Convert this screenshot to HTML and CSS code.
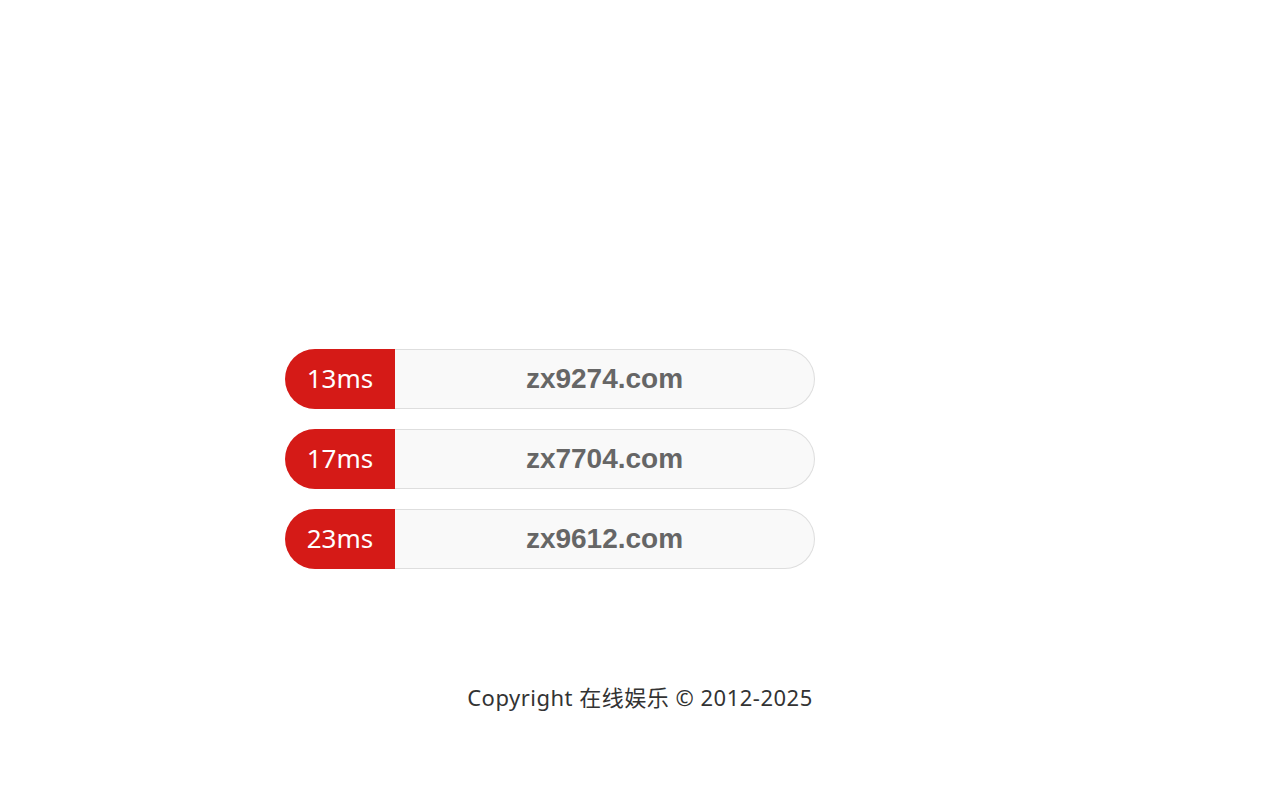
FILE: index.html
```html
<!DOCTYPE html>
<html lang="zh-CN">
<head>
<meta charset="utf-8">
<title>线路检测</title>
<link rel="stylesheet" href="styles.css">
</head>
<body>
<div class="wrap">
  <ul class="lines">
    <li class="line"><span class="ms">13ms</span><a class="domain" href="#">zx9274.com</a></li>
    <li class="line"><span class="ms">17ms</span><a class="domain" href="#">zx7704.com</a></li>
    <li class="line"><span class="ms">23ms</span><a class="domain" href="#">zx9612.com</a></li>
  </ul>
</div>
<footer class="footer">Copyright 在线娱乐 © 2012-2025</footer>
</body>
</html>
```
FILE: styles.css
```css
html, body {
  margin: 0;
  padding: 0;
  background: #fff;
}
body {
  font-family: "Noto Sans", "Noto Sans CJK SC", sans-serif;
}
.wrap {
  width: 710px;
  margin: 0 auto;
  padding-top: 349px;
}
.lines {
  list-style: none;
  margin: 0;
  padding: 0;
  display: flex;
  flex-direction: column;
  gap: 20px;
}
.line {
  display: flex;
  width: 530px;
  height: 60px;
}
.ms {
  width: 110px;
  flex: none;
  background: #d51a17;
  color: #fff;
  border-radius: 30px 0 0 30px;
  font-size: 26px;
  display: flex;
  align-items: center;
  justify-content: center;
  padding-bottom: 3px;
  box-sizing: border-box;
}
.domain {
  flex: 1;
  background: #f9f9f9;
  border: 1px solid #dedede;
  border-left: none;
  border-radius: 0 30px 30px 0;
  color: #666;
  font-family: "Liberation Sans", Arial, sans-serif;
  font-weight: bold;
  font-size: 28px;
  text-decoration: none;
  display: flex;
  align-items: center;
  justify-content: center;
}
.footer {
  text-align: center;
  color: #333;
  font-size: 22px;
  letter-spacing: 0.5px;
  margin-top: 110px;
  line-height: 36px;
}
```
